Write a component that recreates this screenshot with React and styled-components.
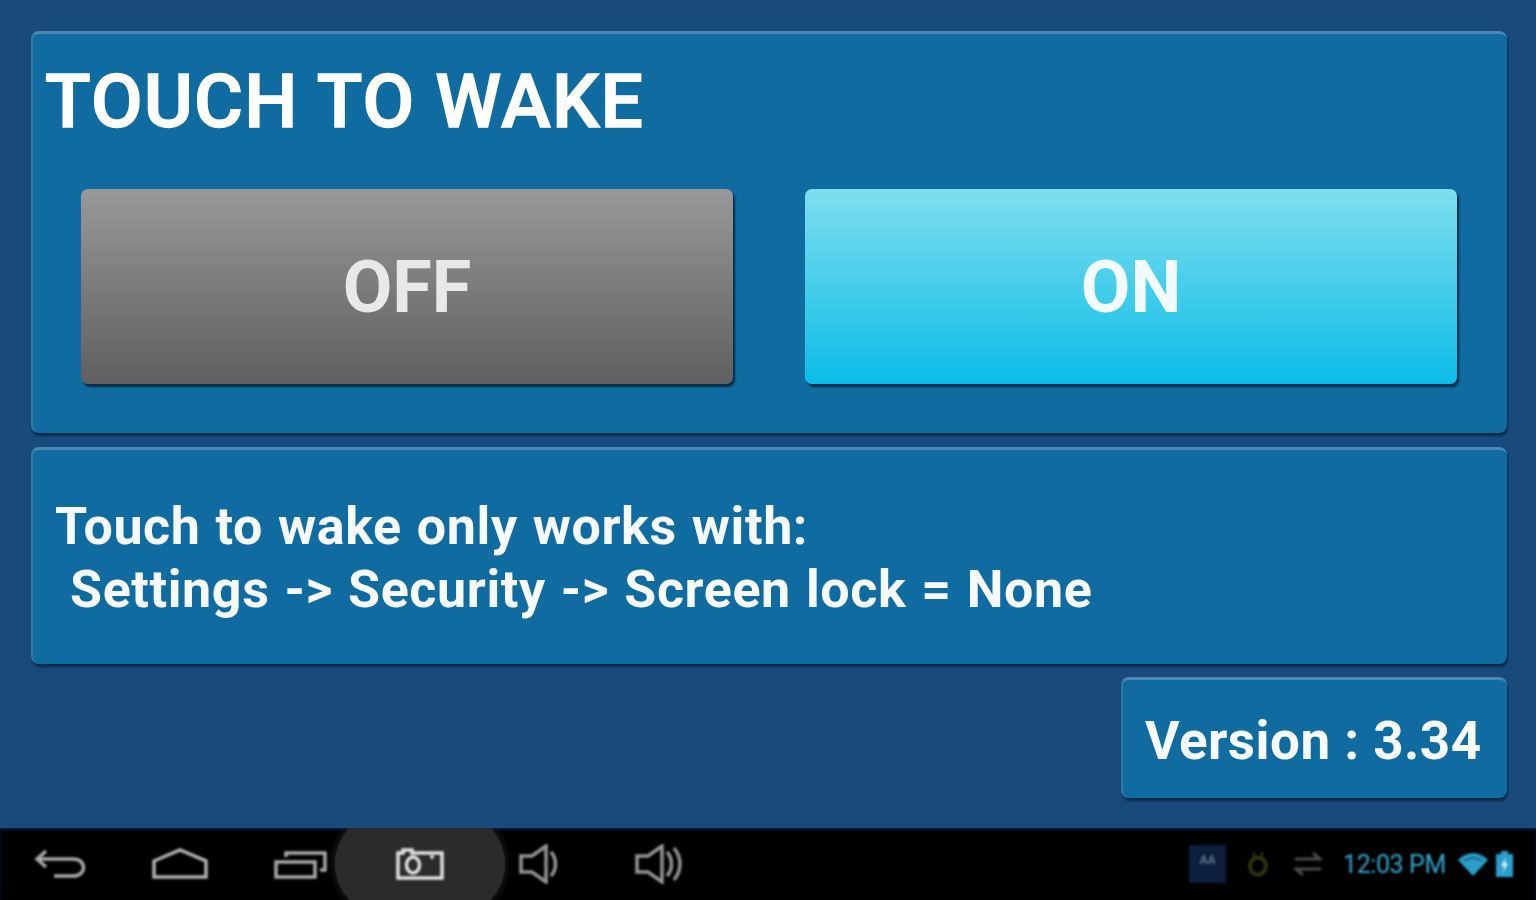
import React from 'react';
import styled, { createGlobalStyle } from 'styled-components';

const GlobalStyle = createGlobalStyle`
    html, body {
        margin: 0;
        padding: 0;
        height: 100%;
        overflow: hidden;
        background: #194a7c;
        font-family: Roboto, "Liberation Sans", sans-serif;
    }
`;

const Screen = styled.div`
    width: 1536px;
    height: 900px;
    display: flex;
    flex-direction: column;
    background: #194a7c;
`;

const Content = styled.main`
    height: 828px;
    box-sizing: border-box;
    padding: 31px 29px 0 31px;
    display: flex;
    flex-direction: column;
`;

const Panel = styled.section`
    box-sizing: border-box;
    background: #0f6ba0;
    border-radius: 8px;
    border-top: 3px solid #4b88b4;
    border-left: 2px solid #2f7cab;
    box-shadow: 1px 3px 2px #0a2c4c;
    filter: blur(0.7px);
`;

const TitlePanel = styled(Panel)`
    height: 402px;
    padding: 19px 48px 0 12px;
`;

const Title = styled.h1`
    margin: 0;
    font-size: 75px;
    line-height: 96px;
    letter-spacing: 1.2px;
    font-weight: 500;
    color: #fff;
    -webkit-text-stroke: 1.4px #fff;
    white-space: nowrap;
`;

const ButtonRow = styled.div`
    margin: 40px 0 0 36px;
    display: grid;
    grid-template-columns: 652px 652px;
    column-gap: 72px;
`;

const ToggleButton = styled.button`
    height: 195px;
    padding: 2px 0 0;
    border: 0;
    border-radius: 7px;
    background: ${({ $on }) =>
        $on
            ? 'linear-gradient(#81deef, #0bbde8)'
            : 'linear-gradient(#989898, #5f5f5f)'};
    box-shadow: 2px 3px 2px #0a2c48;
    color: ${({ $on }) => ($on ? '#f2fbff' : '#e8e8e8')};
    font-family: inherit;
    font-size: 72px;
    font-weight: 700;
`;

const NotePanel = styled(Panel)`
    height: 217px;
    margin-top: 14px;
    padding: 45px 0 0 22px;
`;

const NoteLine = styled.div`
    font-size: 52px;
    line-height: 63px;
    letter-spacing: 0.6px;
    word-spacing: 1.5px;
    font-weight: 700;
    color: #f6fafc;
    white-space: pre;
`;

const VersionRow = styled.div`
    margin-top: 13px;
    display: flex;
    justify-content: flex-end;
`;

const VersionPanel = styled(Panel)`
    width: 386px;
    height: 121px;
    padding: 30px 0 0 22px;
    font-size: 53px;
    line-height: 62px;
    letter-spacing: 0.45px;
    font-weight: 700;
    color: #f6fafc;
    white-space: nowrap;
`;

const NavBar = styled.nav`
    height: 72px;
    display: flex;
    justify-content: space-between;
    background: #000;
    box-shadow: inset 0 2px 3px #04203c;
    overflow: hidden;
`;

const NavButtons = styled.div`
    display: flex;
`;

const NavSlot = styled.div`
    position: relative;
    width: 120px;
    height: 72px;
    display: flex;
    align-items: center;
    justify-content: center;

    &::before {
        content: '';
        display: ${({ $active }) => ($active ? 'block' : 'none')};
        position: absolute;
        left: -25px;
        top: -29px;
        width: 170px;
        height: 130px;
        border-radius: 50%;
        background: #2b2b2b;
        box-shadow: 0 0 8px #2b2b2b;
    }

    svg {
        position: relative;
        filter: blur(0.9px);
    }
`;

const Tray = styled.div`
    display: flex;
    align-items: center;
    padding-right: 23px;
    filter: blur(0.8px);
`;

const Clock = styled.span`
    margin: 0 12px 0 21px;
    width: 103px;
    font-size: 25px;
    letter-spacing: -0.4px;
    color: #35a6cf;
    white-space: nowrap;
`;

const NotifyBox = styled.div`
    width: 37px;
    height: 38px;
    margin-right: 21px;
    box-sizing: border-box;
    padding-top: 8px;
    background: #0d1f3d;
    color: #5a6b80;
    font-size: 12px;
    font-weight: 700;
    text-align: center;
`;

const TraySpacer = styled.span`
    width: ${({ $width }) => $width}px;
`;

const BackIcon = () => (
    <svg width="54" height="32" viewBox="0 0 54 32" fill="none" stroke="#a8a8a8" strokeWidth="3.5">
        <path d="M13 3 L4 11 L13 19 M4 11 H40 C54 11 54 28 40 28 H21" />
    </svg>
);

const HomeIcon = () => (
    <svg width="58" height="32" viewBox="0 0 58 32" fill="none" stroke="#b0b0b0" strokeWidth="3.5">
        <path d="M3 13 L29 2 L55 13 V29 H3 Z" />
    </svg>
);

const RecentsIcon = () => (
    <svg width="54" height="32" viewBox="0 0 54 32" fill="none" stroke="#a8a8a8" strokeWidth="3.5">
        <path d="M3 14 H42 V29 H3 Z M13 9 V5 H52 V22 H47" />
    </svg>
);

const CameraIcon = () => (
    <svg width="50" height="34" viewBox="0 0 50 34" fill="none" stroke="#e2e2e2" strokeWidth="3.5">
        <path d="M3 6 H8 V3 H17 V6 H47 V31 H3 Z" />
        <ellipse cx="18" cy="18" rx="6.5" ry="8" />
        <circle cx="37" cy="10" r="2" fill="#e2e2e2" stroke="none" />
    </svg>
);

const VolumeIcon = ({ loud }) => (
    <svg
        width="50"
        height="40"
        viewBox={loud ? '0 0 50 40' : '-4 0 50 40'}
        fill="none"
        stroke="#949494"
        strokeWidth="3.5"
    >
        <path d="M2 12 H13 L27 2 V38 L13 28 H2 Z" />
        <path d="M32 8 C38 15 38 25 32 32" />
        {loud && <path d="M39 4 C47 14 47 26 39 36" />}
    </svg>
);

const PlugIcon = () => (
    <svg width="22" height="26" viewBox="0 0 22 26" fill="none" stroke="#2e340d" strokeWidth="4">
        <path d="M7 1 V6 M15 1 V6" strokeWidth="2" />
        <ellipse cx="11" cy="15" rx="8" ry="8.5" />
    </svg>
);

const SyncIcon = () => (
    <svg width="28" height="24" viewBox="0 0 28 24" fill="none" stroke="#4a4a4a" strokeWidth="3">
        <path d="M1 7 H25 M19 1 L26 7 L19 7" />
        <path d="M27 17 H3 M9 23 L2 17 L9 17" />
    </svg>
);

const WifiIcon = () => (
    <svg width="30" height="24" viewBox="0 0 30 24">
        <path d="M0 8 C8 -1 22 -1 30 8 L15 24 Z" fill="#2b9ecb" />
        <path d="M6 9 C11 5 19 5 24 9" fill="none" stroke="#0f5e7c" strokeWidth="1.5" />
    </svg>
);

const BatteryIcon = () => (
    <svg width="17" height="26" viewBox="0 0 17 26">
        <path d="M5 0 H12 V3 H17 V26 H0 V3 H5 Z" fill="#2b9ecb" />
        <path d="M10 6 L5 15 H8 L7 22 L12 12 H9 Z" fill="#d5f0f8" />
    </svg>
);

export default function App() {
    return (
        <Screen>
            <GlobalStyle />
            <Content>
                <TitlePanel>
                    <Title>TOUCH TO WAKE</Title>
                    <ButtonRow>
                        <ToggleButton>OFF</ToggleButton>
                        <ToggleButton $on>ON</ToggleButton>
                    </ButtonRow>
                </TitlePanel>
                <NotePanel>
                    <NoteLine>Touch to wake only works with:</NoteLine>
                    <NoteLine>{' Settings -> Security -> Screen lock = None'}</NoteLine>
                </NotePanel>
                <VersionRow>
                    <VersionPanel>Version : 3.34</VersionPanel>
                </VersionRow>
            </Content>
            <NavBar>
                <NavButtons>
                    <NavSlot><BackIcon /></NavSlot>
                    <NavSlot><HomeIcon /></NavSlot>
                    <NavSlot><RecentsIcon /></NavSlot>
                    <NavSlot $active><CameraIcon /></NavSlot>
                    <NavSlot><VolumeIcon /></NavSlot>
                    <NavSlot><VolumeIcon loud /></NavSlot>
                </NavButtons>
                <Tray>
                    <NotifyBox>AA</NotifyBox>
                    <PlugIcon />
                    <TraySpacer $width={25} />
                    <SyncIcon />
                    <Clock>12:03 PM</Clock>
                    <WifiIcon />
                    <TraySpacer $width={8} />
                    <BatteryIcon />
                </Tray>
            </NavBar>
        </Screen>
    );
}
